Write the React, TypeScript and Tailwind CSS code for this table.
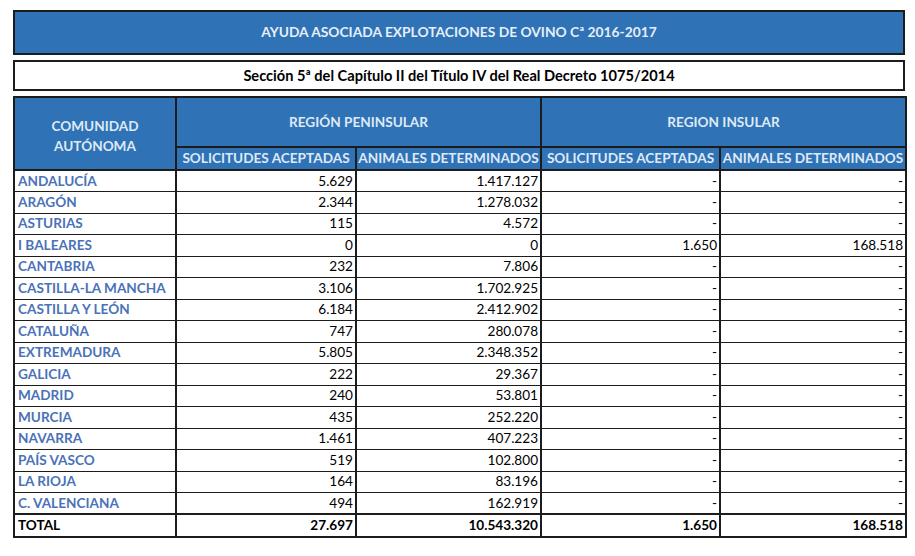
const rows: [string, string, string, string, string][] = [
  ["ANDALUCÍA", "5.629", "1.417.127", "-", "-"],
  ["ARAGÓN", "2.344", "1.278.032", "-", "-"],
  ["ASTURIAS", "115", "4.572", "-", "-"],
  ["I BALEARES", "0", "0", "1.650", "168.518"],
  ["CANTABRIA", "232", "7.806", "-", "-"],
  ["CASTILLA-LA MANCHA", "3.106", "1.702.925", "-", "-"],
  ["CASTILLA Y LEÓN", "6.184", "2.412.902", "-", "-"],
  ["CATALUÑA", "747", "280.078", "-", "-"],
  ["EXTREMADURA", "5.805", "2.348.352", "-", "-"],
  ["GALICIA", "222", "29.367", "-", "-"],
  ["MADRID", "240", "53.801", "-", "-"],
  ["MURCIA", "435", "252.220", "-", "-"],
  ["NAVARRA", "1.461", "407.223", "-", "-"],
  ["PAÍS VASCO", "519", "102.800", "-", "-"],
  ["LA RIOJA", "164", "83.196", "-", "-"],
  ["C. VALENCIANA", "494", "162.919", "-", "-"],
];

export default function App() {
  return (
    <div
      className="w-[915px] h-[556px] bg-white pt-[10px] pl-[13px]"
      style={{ fontFamily: "Lato, 'Liberation Sans', sans-serif" }}
    >
      {/* Title */}
      <div className="w-[892px] h-[45px] flex items-center justify-center bg-[#2f72b5] border-2 border-[#1c1c1c] text-[#e6eef8] text-[13.8px] font-bold">
        AYUDA ASOCIADA EXPLOTACIONES DE OVINO Cª 2016-2017
      </div>

      {/* Subtitle */}
      <div className="w-[892px] h-[31px] mt-[5px] flex items-center justify-center bg-white border-2 border-[#1c1c1c] text-black text-[14.6px] font-bold">
        Sección 5ª del Capítulo II del Título IV del Real Decreto 1075/2014
      </div>

      {/* Table */}
      <table className="mt-[5px] w-[892px] border-collapse border-2 border-[#1c1c1c] table-fixed text-[13.6px]">
        <colgroup>
          <col className="w-[162px]" />
          <col className="w-[180px]" />
          <col className="w-[185px]" />
          <col className="w-[179px]" />
          <col className="w-[186px]" />
        </colgroup>
        <thead className="bg-[#2f72b5] text-[#dfe9f5] font-bold">
          <tr className="h-[50px]">
            <th
              rowSpan={2}
              className="border-2 border-[#1c1c1c] font-bold leading-[20px] text-center align-middle pt-[4px]"
            >
              COMUNIDAD
              <br />
              AUTÓNOMA
            </th>
            <th colSpan={2} className="border-2 border-[#1c1c1c] font-bold text-center">
              REGIÓN PENINSULAR
            </th>
            <th colSpan={2} className="border-2 border-[#1c1c1c] font-bold text-center">
              REGION INSULAR
            </th>
          </tr>
          <tr className="h-[23px]">
            <th className="border-2 border-[#1c1c1c] font-bold text-center whitespace-nowrap px-0">
              SOLICITUDES ACEPTADAS
            </th>
            <th className="border-2 border-[#1c1c1c] font-bold text-center whitespace-nowrap px-0">
              ANIMALES DETERMINADOS
            </th>
            <th className="border-2 border-[#1c1c1c] font-bold text-center whitespace-nowrap px-0">
              SOLICITUDES ACEPTADAS
            </th>
            <th className="border-2 border-[#1c1c1c] font-bold text-center whitespace-nowrap px-0">
              ANIMALES DETERMINADOS
            </th>
          </tr>
        </thead>
        <tbody>
          {rows.map((r) => (
            <tr key={r[0]} className="h-[21.5px]">
              <td className="border-x-2 border-y border-[#1c1c1c] pl-[3px] pt-[1px] font-bold text-[#4a72b8] leading-none whitespace-nowrap">
                {r[0]}
              </td>
              {r.slice(1).map((v, i) => (
                <td
                  key={i}
                  className="border-x-2 border-y border-[#1c1c1c] pr-[2px] pt-[1px] text-right text-black leading-none"
                >
                  {v}
                </td>
              ))}
            </tr>
          ))}
          <tr className="h-[23px] font-bold text-black">
            <td className="border-2 border-[#1c1c1c] pl-[3px] pt-[1px] leading-none">TOTAL</td>
            <td className="border-2 border-[#1c1c1c] pr-[2px] pt-[1px] text-right leading-none">27.697</td>
            <td className="border-2 border-[#1c1c1c] pr-[2px] pt-[1px] text-right leading-none">10.543.320</td>
            <td className="border-2 border-[#1c1c1c] pr-[2px] pt-[1px] text-right leading-none">1.650</td>
            <td className="border-2 border-[#1c1c1c] pr-[2px] pt-[1px] text-right leading-none">168.518</td>
          </tr>
        </tbody>
      </table>
    </div>
  );
}
